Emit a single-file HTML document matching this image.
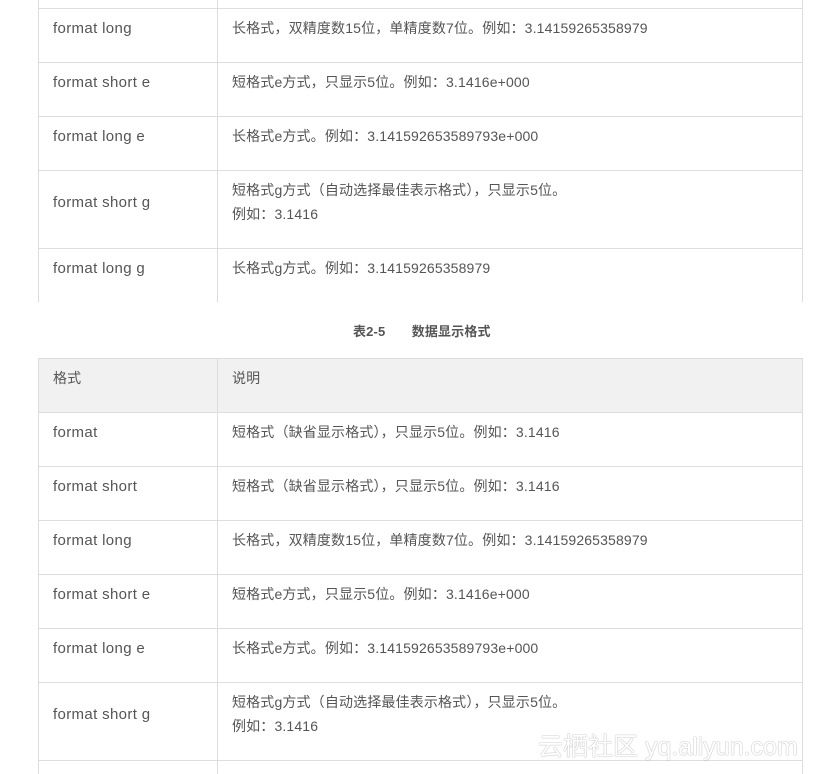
<!DOCTYPE html>
<html><head><meta charset="utf-8"><style>
body{margin:0;width:816px;height:774px;overflow:hidden;background:#fff;font-family:"Liberation Sans","Noto Sans CJK SC",sans-serif;color:#555;font-size:14px;position:relative}
.h{position:absolute;left:38px;width:765px;height:1px;background:#ddd}
.v{position:absolute;width:1px;background:#ddd}
.t{position:absolute;line-height:24px;white-space:nowrap;letter-spacing:0.15px}
.c1{font-size:15px;letter-spacing:0.35px;margin-top:1px}
.bg{position:absolute;left:38px;width:765px;background:#f1f1f1}
</style></head><body>
<div class="bg" style="top:358px;height:54px"></div>
<div class="v" style="left:38px;top:0;height:302px"></div>
<div class="v" style="left:217px;top:0;height:302px"></div>
<div class="v" style="left:802px;top:0;height:302px"></div>
<div class="v" style="left:38px;top:358px;height:416px"></div>
<div class="v" style="left:217px;top:358px;height:416px"></div>
<div class="v" style="left:802px;top:358px;height:416px"></div>
<div class="h" style="top:8px"></div><div class="h" style="top:62px"></div><div class="h" style="top:116px"></div><div class="h" style="top:170px"></div><div class="h" style="top:248px"></div>
<div class="h" style="top:358px"></div><div class="h" style="top:412px"></div><div class="h" style="top:466px"></div><div class="h" style="top:520px"></div><div class="h" style="top:574px"></div><div class="h" style="top:628px"></div><div class="h" style="top:682px"></div><div class="h" style="top:760px"></div>

<div class="t c1" style="left:53px;top:16px">format long</div><div class="t" style="left:232px;top:16px">长格式，双精度数15位，单精度数7位。例如：3.14159265358979</div>
<div class="t c1" style="left:53px;top:70px">format short e</div><div class="t" style="left:232px;top:70px">短格式e方式，只显示5位。例如：3.1416e+000</div>
<div class="t c1" style="left:53px;top:124px">format long e</div><div class="t" style="left:232px;top:124px">长格式e方式。例如：3.141592653589793e+000</div>
<div class="t c1" style="left:53px;top:190px">format short g</div><div class="t" style="left:232px;top:178px">短格式g方式（自动选择最佳表示格式），只显示5位。<br>例如：3.1416</div>
<div class="t c1" style="left:53px;top:256px">format long g</div><div class="t" style="left:232px;top:256px">长格式g方式。例如：3.14159265358979</div>

<div class="t" style="left:353px;top:320px;font-size:13px;font-weight:bold">表2-5&nbsp;&nbsp;&nbsp;&nbsp;&nbsp;&nbsp;&nbsp;数据显示格式</div>

<div class="t" style="left:53px;top:366px">格式</div><div class="t" style="left:232px;top:366px">说明</div>
<div class="t c1" style="left:53px;top:420px">format</div><div class="t" style="left:232px;top:420px">短格式（缺省显示格式），只显示5位。例如：3.1416</div>
<div class="t c1" style="left:53px;top:474px">format short</div><div class="t" style="left:232px;top:474px">短格式（缺省显示格式），只显示5位。例如：3.1416</div>
<div class="t c1" style="left:53px;top:528px">format long</div><div class="t" style="left:232px;top:528px">长格式，双精度数15位，单精度数7位。例如：3.14159265358979</div>
<div class="t c1" style="left:53px;top:582px">format short e</div><div class="t" style="left:232px;top:582px">短格式e方式，只显示5位。例如：3.1416e+000</div>
<div class="t c1" style="left:53px;top:636px">format long e</div><div class="t" style="left:232px;top:636px">长格式e方式。例如：3.141592653589793e+000</div>
<div class="t c1" style="left:53px;top:702px">format short g</div><div class="t" style="left:232px;top:690px">短格式g方式（自动选择最佳表示格式），只显示5位。<br>例如：3.1416</div>

<div class="t" style="left:538px;top:731px;font-size:25px;line-height:32px;color:#fff;letter-spacing:0;text-shadow:0 0 1px #aaa,0 0 1px #aaa">云栖社区 yq.aliyun.com</div>
</body></html>
